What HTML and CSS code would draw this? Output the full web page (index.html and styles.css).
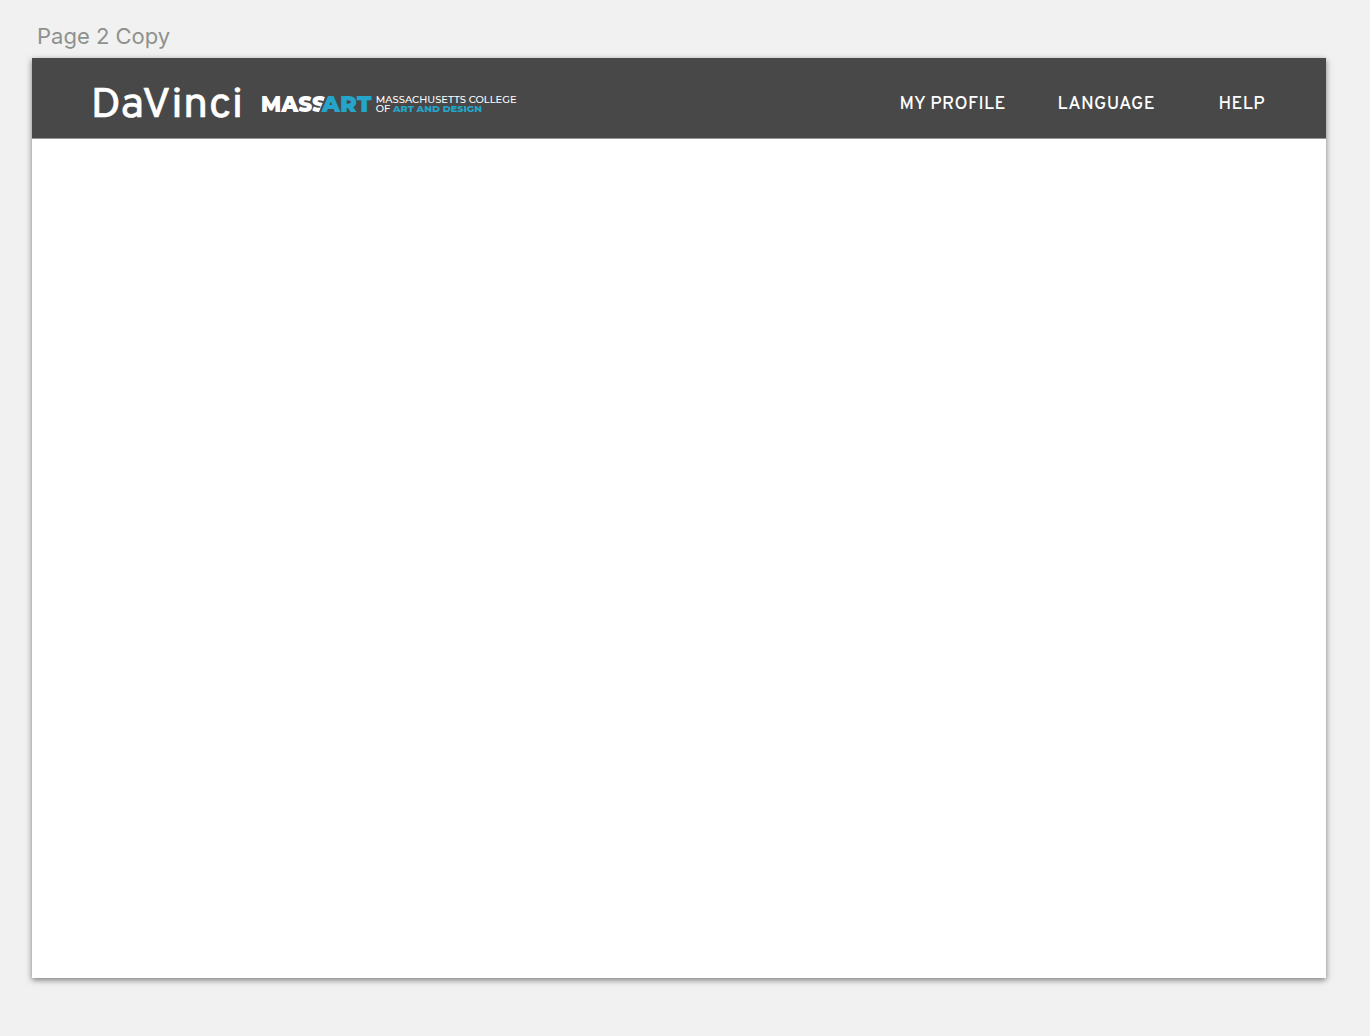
FILE: index.html
```html
<!DOCTYPE html>
<html lang="en">
<head>
<meta charset="utf-8">
<title>DaVinci</title>
<link rel="stylesheet" href="styles.css">
</head>
<body>
<div class="artboard-name">Page 2 Copy</div>
<main class="artboard">
  <header class="topbar">
    <svg class="brand" width="430" height="80" viewBox="0 0 430 80" role="img" aria-label="DaVinci, MassArt">
      <text class="product" x="58.5" y="59" textLength="153" lengthAdjust="spacingAndGlyphs">DaVinci</text>
      <text class="mark" x="229" y="54" textLength="65" lengthAdjust="spacingAndGlyphs">MASS</text>
      <path class="cut" d="M286.5 55L294 37H302V55Z"/>
      <text class="mark accent" x="289.7" y="54" textLength="50" lengthAdjust="spacingAndGlyphs">ART</text>
      <text class="college" x="343.7" y="44.7" textLength="141" lengthAdjust="spacingAndGlyphs">MASSACHUSETTS COLLEGE</text>
      <text class="college" x="343.7" y="54.3" textLength="14.5" lengthAdjust="spacingAndGlyphs">OF</text>
      <text class="college bold accent" x="361" y="54.3" textLength="89" lengthAdjust="spacingAndGlyphs">ART AND DESIGN</text>
    </svg>
    <nav class="menu">
      <a class="profile">MY PROFILE</a>
      <a class="language">LANGUAGE</a>
      <a class="help">HELP</a>
    </nav>
  </header>
</main>
</body>
</html>
```

FILE: styles.css
```css
body {
  margin: 0;
  height: 1036px;
  overflow: hidden;
  background: #f1f1f1;
  font-family: Inter, "Liberation Sans", sans-serif;
}
.artboard-name {
  height: 58px;
  padding: 23px 0 0 37px;
  box-sizing: border-box;
  font-size: 22px;
  line-height: 27px;
  color: #8e918e;
}
.artboard {
  width: 1294px;
  height: 920px;
  margin-left: 32px;
  background: #fff;
  box-shadow: 0 2px 6px rgba(0, 0, 0, 0.5);
}
.topbar {
  display: flex;
  justify-content: space-between;
  height: 81px;
  box-sizing: border-box;
  border-bottom: 1px solid #979797;
  background: #484848;
}
.brand {
  overflow: visible;
}
.product {
  font: 400 42px Overpass, Roboto, sans-serif;
  letter-spacing: 0.3px;
  fill: #fff;
  stroke: #fff;
  stroke-width: 0.6px;
}
.mark {
  font: 900 22.5px Montserrat, Inter, sans-serif;
  fill: #fff;
}
.cut {
  fill: #484848;
}
.college {
  font: 500 9.2px Montserrat, Inter, sans-serif;
  fill: #fff;
}
.bold {
  font-weight: 800;
}
.accent {
  fill: #25a5c9;
}
.menu {
  display: flex;
  align-items: center;
  padding: 13px 59.5px 0 0;
  font: 500 18px Overpass, Roboto, sans-serif;
  letter-spacing: 0.4px;
  color: #fff;
}
.profile {
  width: 158px;
}
.language {
  width: 161px;
}
.help {
  width: 48px;
}
.menu a {
  white-space: nowrap;
}
```
